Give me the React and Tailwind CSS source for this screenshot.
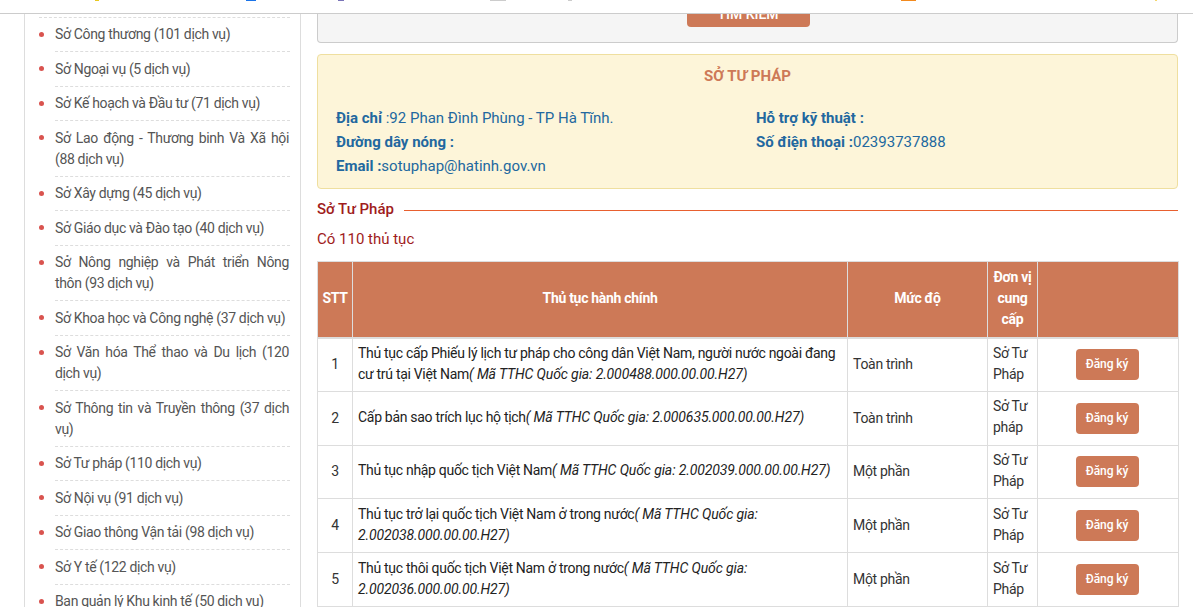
import React from 'react';

const departments = [
  { name: 'Sở Công thương (101 dịch vụ)' },
  { name: 'Sở Ngoại vụ (5 dịch vụ)' },
  { name: 'Sở Kế hoạch và Đầu tư (71 dịch vụ)' },
  { name: 'Sở Lao động - Thương binh Và Xã hội (88 dịch vụ)' },
  { name: 'Sở Xây dựng (45 dịch vụ)' },
  { name: 'Sở Giáo dục và Đào tạo (40 dịch vụ)' },
  { name: 'Sở Nông nghiệp và Phát triển Nông thôn (93 dịch vụ)' },
  { name: 'Sở Khoa học và Công nghệ (37 dịch vụ)' },
  { name: 'Sở Văn hóa Thể thao và Du lịch (120 dịch vụ)' },
  { name: 'Sở Thông tin và Truyền thông (37 dịch vụ)' },
  { name: 'Sở Tư pháp (110 dịch vụ)' },
  { name: 'Sở Nội vụ (91 dịch vụ)' },
  { name: 'Sở Giao thông Vận tải (98 dịch vụ)' },
  { name: 'Sở Y tế (122 dịch vụ)' },
  { name: 'Ban quản lý Khu kinh tế (50 dịch vụ)' },
];

const procedures = [
  { stt: 1, name: 'Thủ tục cấp Phiếu lý lịch tư pháp cho công dân Việt Nam, người nước ngoài đang cư trú tại Việt Nam', code: '( Mã TTHC Quốc gia: 2.000488.000.00.00.H27)', level: 'Toàn trình', unit: 'Sở Tư Pháp' },
  { stt: 2, name: 'Cấp bản sao trích lục hộ tịch', code: '( Mã TTHC Quốc gia: 2.000635.000.00.00.H27)', level: 'Toàn trình', unit: 'Sở Tư pháp' },
  { stt: 3, name: 'Thủ tục nhập quốc tịch Việt Nam', code: '( Mã TTHC Quốc gia: 2.002039.000.00.00.H27)', level: 'Một phần', unit: 'Sở Tư Pháp' },
  { stt: 4, name: 'Thủ tục trở lại quốc tịch Việt Nam ở trong nước', code: '( Mã TTHC Quốc gia: 2.002038.000.00.00.H27)', level: 'Một phần', unit: 'Sở Tư Pháp' },
  { stt: 5, name: 'Thủ tục thôi quốc tịch Việt Nam ở trong nước', code: '( Mã TTHC Quốc gia: 2.002036.000.00.00.H27)', level: 'Một phần', unit: 'Sở Tư Pháp' },
];

function App() {
  return (
    <div className="h-screen overflow-hidden bg-white text-[14px] leading-[21px] text-[#333]" style={{ fontFamily: 'Roboto, sans-serif' }}>
      {/* Thanh trên cùng */}
      <div className="h-[14px] border-b border-[#ccc] overflow-hidden flex">
        <div className="w-[95px]"></div>
        <div className="w-[4px] h-[1px] bg-[#e8c820]"></div>
        <div className="w-[147px]"></div>
        <div className="w-[10px] h-[1px] bg-[#1a73e8]"></div>
        <div className="w-[82px]"></div>
        <div className="w-[6px] h-[1px] bg-[#7a74b8]"></div>
        <div className="w-[146px]"></div>
        <div className="w-[16px] h-[1px] bg-[#ccc]"></div>
        <div className="w-[62px]"></div>
        <div className="w-[4px] h-[1px] bg-[#ccc]"></div>
        <div className="w-[329px]"></div>
        <div className="w-[15px] h-[1px] bg-[#f28a1e]"></div>
        <div className="w-[239px]"></div>
        <div className="w-[2px] h-[1px] bg-[#f5d76e]"></div>
      </div>

      <div className="flex pl-[24px] pr-[15px]">
        {/* Danh sách sở ngành */}
        <aside className="w-[277px] shrink-0 border-x border-[#ddd] pl-[14px] pr-[10px] h-[800px]">
          <ul className="mt-[2.8px] border-t border-dashed border-[#ddd]">
            {departments.map((d) => (
              <li key={d.name} className="relative ml-[16px] pr-[1px] border-b border-dashed border-[#ddd] py-[6.25px] text-justify text-[#555] tracking-[-0.35px]">
                <span className="absolute left-[-16px] top-[14px] w-[5px] h-[5px] rounded-full bg-[#d9534f]"></span>
                {d.name}
              </li>
            ))}
          </ul>
        </aside>

        {/* Nội dung chính */}
        <main className="flex-1 min-w-0 pl-[16px]">
          <div className="h-[29px] bg-[#f5f5f5] border border-t-0 border-[#ccc] rounded-b-[4px] flex justify-center items-start">
            <button className="block w-[123px] h-[13px] ml-[1px] bg-[#cd7957] rounded-b-[4px] text-white overflow-hidden">
              <span className="block -mt-[14px] leading-[20px] text-[14px] font-medium">TÌM KIẾM</span>
            </button>
          </div>

          <div className="mt-[11px] h-[135px] bg-[#fdf5d9] border border-[#efdf9f] rounded-[4px] px-[18px] pt-[11px]">
            <h3 className="text-center font-bold text-[15px] text-[#cd7957] leading-[20px] mb-[20px]">SỞ TƯ PHÁP</h3>
            <div className="flex text-[15px] leading-[24px] text-[#22689f]">
              <div className="w-[420px]">
                <p><b>Địa chỉ </b>:92 Phan Đình Phùng - TP Hà Tĩnh.</p>
                <p><b>Đường dây nóng :</b></p>
                <p><b>Email :</b>sotuphap@hatinh.gov.vn</p>
              </div>
              <div>
                <p><b>Hỗ trợ kỹ thuật :</b></p>
                <p><b>Số điện thoại :</b>02393737888</p>
              </div>
            </div>
          </div>

          <div className="mt-[10px] flex items-start gap-[10px]">
            <span className="font-medium text-[15px] text-[#a01c1c] leading-[21px]">Sở Tư Pháp</span>
            <div className="flex-1 h-[1px] bg-[#e8602f] mt-[11px]"></div>
          </div>
          <p className="mt-[9px] text-[15px] text-[#a01c1c]">Có 110 thủ tục</p>

          <table className="mt-[11px] w-[861px] table-fixed border-collapse tracking-[-0.3px]">
            <colgroup>
              <col className="w-[35px]" />
              <col className="w-[495px]" />
              <col className="w-[140px]" />
              <col className="w-[50px]" />
              <col className="w-[141px]" />
            </colgroup>
            <thead>
              <tr className="bg-[#cd7957] text-white h-[76px]">
                <th className="border border-[#ddd] border-b-2 pb-[2px] font-bold text-center">STT</th>
                <th className="border border-[#ddd] border-b-2 pb-[2px] font-bold text-center">Thủ tục hành chính</th>
                <th className="border border-[#ddd] border-b-2 pb-[2px] font-bold text-center">Mức độ</th>
                <th className="border border-[#ddd] border-b-2 pb-[2px] font-bold text-center">Đơn vị cung cấp</th>
                <th className="border border-[#ddd] border-b-2"></th>
              </tr>
            </thead>
            <tbody>
              {procedures.map((p) => (
                <tr key={p.stt} className="h-[53.8px]">
                  <td className="border border-[#ddd] text-center">{p.stt}</td>
                  <td className="border border-[#ddd] px-[5px] pb-[2px] text-[#222]">
                    {p.name}<i className="tracking-[-0.12px]">{p.code}</i>
                  </td>
                  <td className="border border-[#ddd] px-[5px]">{p.level}</td>
                  <td className="border border-[#ddd] px-[5px] pb-[2px]">{p.unit}</td>
                  <td className="border border-[#ddd] text-center pr-[2px]">
                    <button className="w-[63px] h-[31px] bg-[#cd7957] rounded-[4px] text-white text-[12px] font-medium tracking-[-0.1px]">Đăng ký</button>
                  </td>
                </tr>
              ))}
            </tbody>
          </table>
        </main>
      </div>
    </div>
  );
}

export default App;
